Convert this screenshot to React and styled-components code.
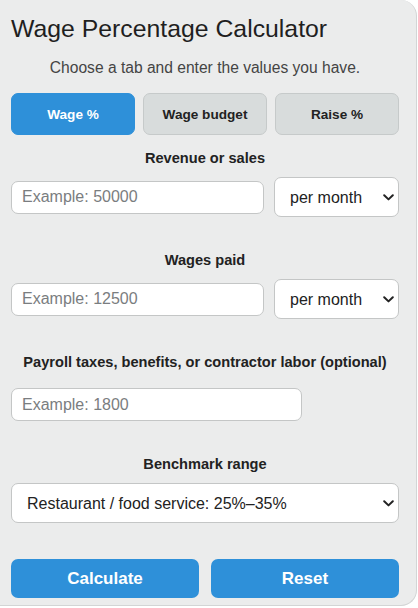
import React, { useState } from "react";
import styled, { createGlobalStyle } from "styled-components";

const Global = createGlobalStyle`
  html, body { margin: 0; padding: 0; background: #ffffff; }
  body { font-family: "Liberation Sans", Arial, sans-serif; overflow: hidden; }
  * { box-sizing: border-box; }
`;

const Card = styled.div`
  width: 417px;
  height: 606px;
  background: #ebecec;
  border-right: 1px solid #d3d5d5;
  border-bottom: 1px solid #d3d5d5;
  border-radius: 0 16px 16px 0;
  padding: 14px 17px 0 11px;
  display: flex;
  flex-direction: column;
  color: #222;
`;

const Title = styled.h1`
  margin: 0;
  font-size: 24.8px;
  line-height: 30px;
  font-weight: 400;
  color: #1f1f1f;
`;

const Subtitle = styled.p`
  margin: 14px 0 0;
  font-size: 15.6px;
  line-height: 20px;
  text-align: center;
  color: #444;
`;

const Tabs = styled.div`
  margin-top: 15px;
  display: grid;
  grid-template-columns: repeat(3, 1fr);
  gap: 8px;
`;

const Tab = styled.button`
  height: 42px;
  border-radius: 7px;
  border: 1px solid ${(p) => (p.$active ? "#2e90d9" : "#c6caca")};
  background: ${(p) => (p.$active ? "#2e90d9" : "#d8dcdc")};
  color: ${(p) => (p.$active ? "#fff" : "#222")};
  font-family: inherit;
  font-size: 13.6px;
  font-weight: 700;
  cursor: pointer;
`;

const Section = styled.div`
  margin-top: ${(p) => p.$top}px;
  display: flex;
  flex-direction: column;
  gap: 10px;
`;

const Label = styled.label`
  font-size: 14.6px;
  line-height: 18px;
  font-weight: 700;
  text-align: center;
  color: #222;
`;

const Row = styled.div`
  display: grid;
  grid-template-columns: ${(p) => p.$cols};
  gap: 10px;
  height: 40px;
  align-items: ${(p) => p.$align || "center"};
`;

const Input = styled.input`
  height: 33px;
  width: 100%;
  border: 1px solid #c4c6c6;
  border-radius: 7px;
  background: #fff;
  padding: 0 10px;
  font-family: inherit;
  font-size: 16px;
  color: #222;
  outline: none;
  &::placeholder { color: #7a7d80; }
`;

const SelectWrap = styled.div`
  position: relative;
  height: 40px;
`;

const Select = styled.select`
  appearance: none;
  -webkit-appearance: none;
  width: 100%;
  height: 40px;
  border: 1px solid #c4c6c6;
  border-radius: 7px;
  background: #fff;
  padding: 0 24px 0 15px;
  font-family: inherit;
  font-size: 16px;
  color: #222;
  outline: none;
`;

const Chevron = styled.svg`
  position: absolute;
  right: 5px;
  top: 50%;
  width: 11px;
  height: 7px;
  margin-top: -3px;
  pointer-events: none;
`;

const Buttons = styled.div`
  margin-top: 36px;
  display: grid;
  grid-template-columns: 1fr 1fr;
  gap: 12px;
`;

const ActionButton = styled.button`
  height: 39px;
  border: none;
  border-radius: 7px;
  background: #2e90d9;
  color: #fff;
  font-family: inherit;
  font-size: 17px;
  font-weight: 700;
  cursor: pointer;
`;

function Dropdown({ options }) {
  return (
    <SelectWrap>
      <Select defaultValue={options[0]}>
        {options.map((o) => (
          <option key={o}>{o}</option>
        ))}
      </Select>
      <Chevron viewBox="0 0 11 7">
        <path d="M1.2 1.2 L5.5 5.4 L9.8 1.2" fill="none" stroke="#222" strokeWidth="2" strokeLinecap="round" strokeLinejoin="round" />
      </Chevron>
    </SelectWrap>
  );
}

const periods = ["per month", "per week", "per year"];

export default function App() {
  const [tab, setTab] = useState(0);
  const tabs = ["Wage %", "Wage budget", "Raise %"];
  return (
    <Card>
      <Global />
      <Title>Wage Percentage Calculator</Title>
      <Subtitle>Choose a tab and enter the values you have.</Subtitle>
      <Tabs>
        {tabs.map((t, i) => (
          <Tab key={t} $active={tab === i} onClick={() => setTab(i)}>
            {t}
          </Tab>
        ))}
      </Tabs>
      <Section $top={14}>
        <Label>Revenue or sales</Label>
        <Row $cols="1fr 125px">
          <Input placeholder="Example: 50000" />
          <Dropdown options={periods} />
        </Row>
      </Section>
      <Section $top={34}>
        <Label>Wages paid</Label>
        <Row $cols="1fr 125px">
          <Input placeholder="Example: 12500" />
          <Dropdown options={periods} />
        </Row>
      </Section>
      <Section $top={34}>
        <Label>Payroll taxes, benefits, or contractor labor (optional)</Label>
        <Row $cols="291px" $align="end">
          <Input placeholder="Example: 1800" />
        </Row>
      </Section>
      <Section $top={34}>
        <Label>Benchmark range</Label>
        <Dropdown
          options={[
            "Restaurant / food service: 25%–35%",
            "Retail: 10%–20%",
            "Professional services: 40%–50%",
          ]}
        />
      </Section>
      <Buttons>
        <ActionButton>Calculate</ActionButton>
        <ActionButton>Reset</ActionButton>
      </Buttons>
    </Card>
  );
}
